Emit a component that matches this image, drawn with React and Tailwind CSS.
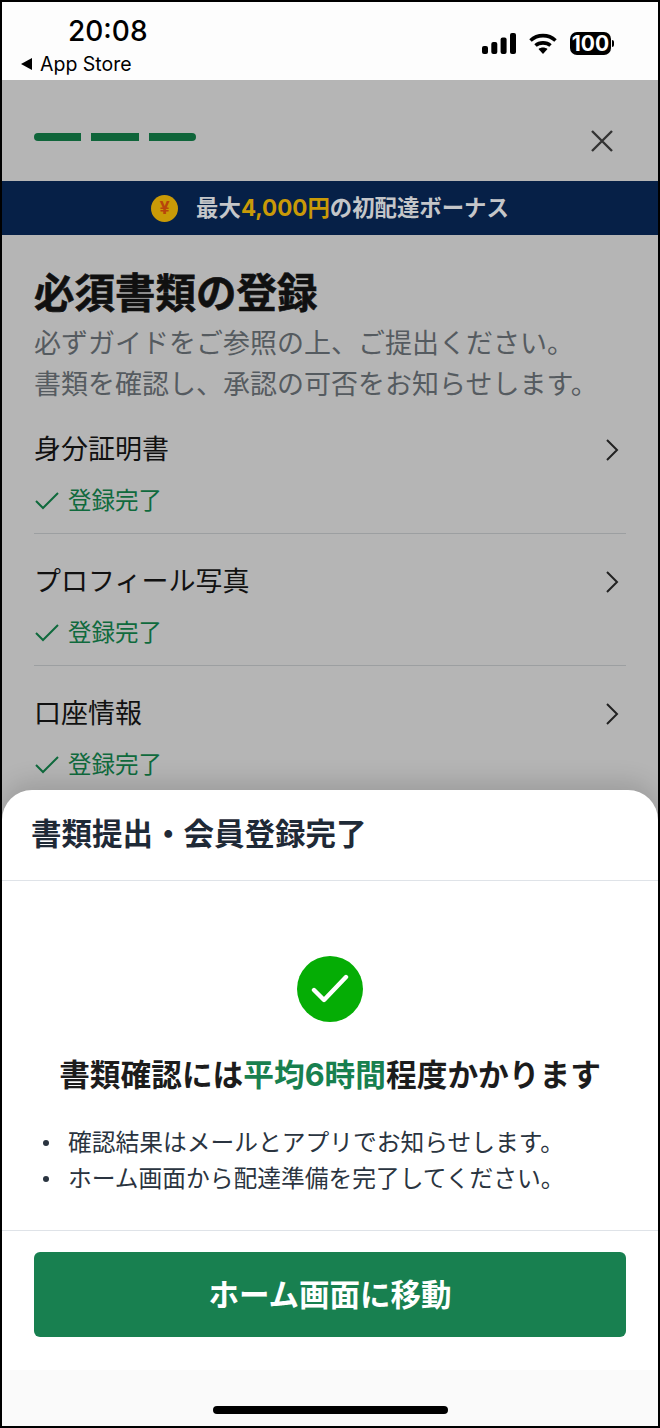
const documents = ["身分証明書", "プロフィール写真", "口座情報"];

function SignalIcon() {
  return (
    <svg width="34" height="21" viewBox="0 0 34 21" fill="#000">
      <rect x="0" y="13" width="6" height="8" rx="2" />
      <rect x="9.300" y="9" width="6" height="12" rx="2" />
      <rect x="18.600" y="4.500" width="6" height="16.500" rx="2" />
      <rect x="28" y="0" width="6" height="21" rx="2" />
    </svg>
  );
}

function WifiIcon() {
  return (
    <svg width="28" height="22" viewBox="0 0 28 22" fill="none" stroke="#000" strokeWidth="3.6">
      <path d="M1.500 7.500C8.500 1 19.500 1 26.500 7.500" />
      <path d="M6.500 12.500C10.500 9 17.500 9 21.500 12.500" />
      <path d="M9.500 16L14 21L18.500 16C16 14 12 14 9.500 16Z" fill="#000" stroke="none" />
    </svg>
  );
}

function Battery() {
  return (
    <div className="flex items-center">
      <div className="flex h-[23px] w-[41px] items-center justify-center rounded-[7px] bg-black text-[21px] leading-none font-bold text-white">
        100
      </div>
      <div className="ml-[1px] h-[7px] w-[2px] rounded-r-full bg-black" />
    </div>
  );
}

function StatusBar() {
  return (
    <div className="flex h-[78px] items-start justify-between bg-[#fdfdfd] font-['Inter',sans-serif]">
      <div className="pl-[19px]">
        <div className="pt-[13px] pl-[47px] text-[28px] leading-[32px] font-medium text-black">20:08</div>
        <div className="mt-[6px] flex items-center text-[19.500px] leading-[22px] text-black">
          <span className="mr-[8px] h-0 w-0 border-y-[6px] border-r-[11px] border-y-transparent border-r-black" />
          App Store
        </div>
      </div>
      <div className="flex items-center gap-[13px] pt-[30px] pr-[44px]">
        <SignalIcon />
        <WifiIcon />
        <Battery />
      </div>
    </div>
  );
}

function DocumentRow({ name, first }) {
  return (
    <div className={first ? "pb-[16px]" : "border-t border-[#9c9fa1] pt-[23px] pb-[16px]"}>
      <div className="flex h-[50px] items-center justify-between">
        <span className="text-[27px] leading-[36px] text-[#111]">{name}</span>
        <svg width="14" height="22" viewBox="0 0 14 22" fill="none" stroke="#222" strokeWidth="2" className="mr-[7px]">
          <path d="M2 1L12 11L2 21" />
        </svg>
      </div>
      <div className="mt-[10px] flex h-[32px] items-center gap-[9px] text-[23.500px] leading-[32px] text-[#0f6a3d]">
        <svg width="24" height="18" viewBox="0 0 24 18" fill="none" stroke="currentColor" strokeWidth="2" className="ml-[1px]">
          <path d="M1 9L8 16L23 1" />
        </svg>
        登録完了
      </div>
    </div>
  );
}

function Background() {
  return (
    <div className="h-[1346px] bg-[#b5b5b5]">
      <div className="flex h-[101px] items-start justify-between pr-[44px] pl-[32px]">
        <div className="mt-[53px] flex gap-[10px]">
          <div className="h-[8px] w-[47px] rounded-l-full bg-[#0f653a]" />
          <div className="h-[8px] w-[48px] bg-[#0f653a]" />
          <div className="h-[8px] w-[47px] rounded-r-full bg-[#0f653a]" />
        </div>
        <svg width="24" height="22" viewBox="0 0 24 22" fill="none" stroke="#333" strokeWidth="2.400" className="mt-[50px]">
          <path d="M2 1L22 21M22 1L2 21" />
        </svg>
      </div>
      <div className="flex h-[54px] items-center justify-center gap-[18px] bg-[#062047] text-[22.400px] leading-none font-bold text-[#c4c6c9]">
        <div className="flex h-[27px] w-[27px] items-center justify-center rounded-full bg-[#c99a07] text-[18px] font-bold text-[#b8450c]">
          ¥
        </div>
        <div>
          最大<span className="text-[#c99a07]">4,000円</span>の初配達ボーナス
        </div>
      </div>
      <div className="px-[32px] pt-[31px]">
        <h1 className="text-[40.500px] leading-[56px] font-bold text-[#101010] [-webkit-text-stroke:0.6px_#101010]">
          必須書類の登録
        </h1>
        <p className="mt-[1px] text-[27px] leading-[41px] text-[#555b60]">
          必ずガイドをご参照の上、ご提出ください。
          <br />
          書類を確認し、承認の可否をお知らせします。
        </p>
        <div className="mt-[20px]">
          {documents.map((name, i) => (
            <DocumentRow key={name} name={name} first={i === 0} />
          ))}
        </div>
      </div>
    </div>
  );
}

function CompletionSheet() {
  return (
    <div className="absolute inset-x-0 bottom-0 h-[636px] overflow-hidden rounded-t-[30px] bg-white shadow-[0_-8px_24px_rgba(0,0,0,0.14)]">
      <div className="flex h-[91px] items-start border-b border-[#dfe3e8] pt-[23px] pl-[29px] text-[30.500px] leading-[42px] font-bold text-[#1f2a37]">
        書類提出・会員登録完了
      </div>
      <div className="flex h-[350px] flex-col border-b border-[#dfe3e8] pt-[75px]">
        <div className="flex justify-center">
          <div className="flex h-[66px] w-[66px] items-center justify-center rounded-full bg-[#05ad05]">
            <svg width="38" height="30" viewBox="0 0 38 30" fill="none" stroke="#fff" strokeWidth="4.400" strokeLinecap="round" strokeLinejoin="round">
              <path d="M3 16L13 26L35 3" />
            </svg>
          </div>
        </div>
        <h2 className="mt-[32px] text-center text-[30.700px] leading-[42px] font-bold text-[#1c1c1c]">
          書類確認には<span className="text-[#18804f]">平均6時間</span>程度かかります
        </h2>
        <ul className="mt-[29px] pl-[41px] text-[23.750px] leading-[36px] text-[#2a3440]">
          <li className="flex items-center gap-[19px]">
            <span className="h-[6px] w-[6px] rounded-full bg-[#2a3440]" />
            確認結果はメールとアプリでお知らせします。
          </li>
          <li className="flex items-center gap-[19px]">
            <span className="h-[6px] w-[6px] rounded-full bg-[#2a3440]" />
            ホーム画面から配達準備を完了してください。
          </li>
        </ul>
      </div>
      <div className="h-[139px] px-[32px] pt-[21px]">
        <button className="h-[85px] w-full rounded-[6px] bg-[#188050] text-[30.500px] font-bold text-white">
          ホーム画面に移動
        </button>
      </div>
      <div className="flex h-[56px] items-end justify-center bg-[#fafafa] pb-[12px]">
        <div className="h-[8px] w-[235px] rounded-full bg-black" />
      </div>
    </div>
  );
}

export default function App() {
  return (
    <div className="relative h-[1428px] w-[660px] overflow-hidden border-2 border-black font-['Inter','Noto_Sans_CJK_JP',sans-serif]">
      <StatusBar />
      <Background />
      <CompletionSheet />
    </div>
  );
}
